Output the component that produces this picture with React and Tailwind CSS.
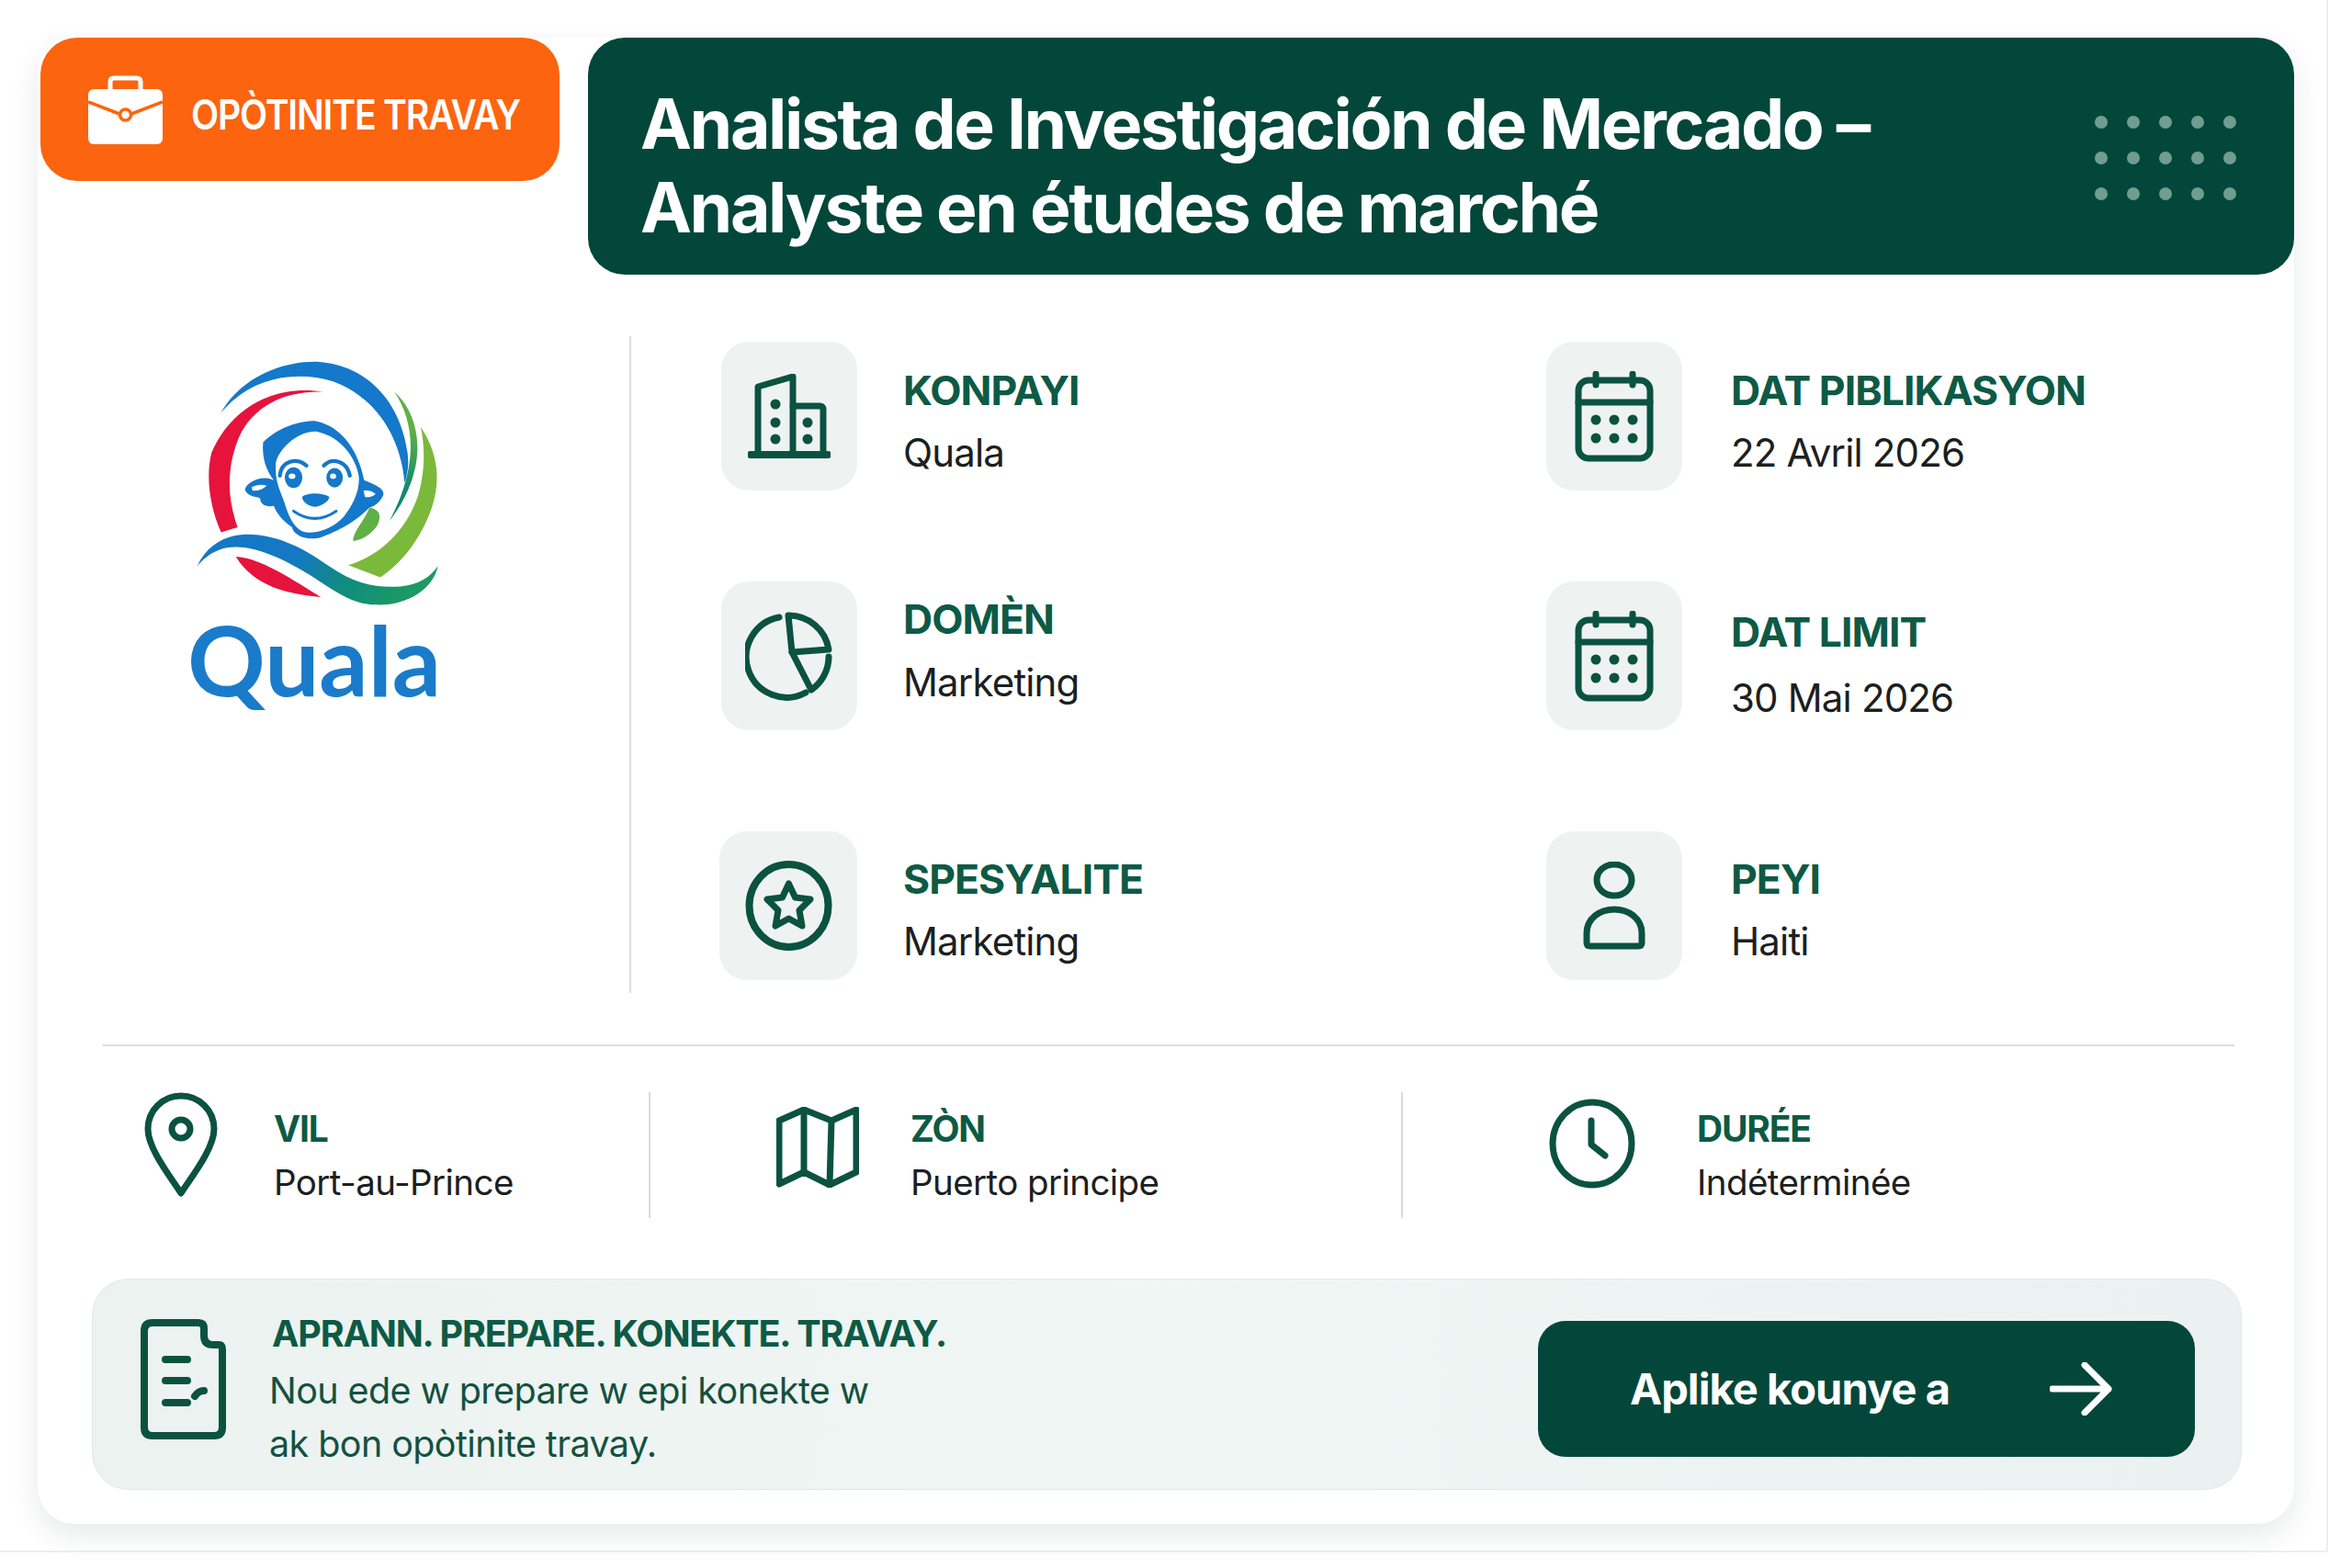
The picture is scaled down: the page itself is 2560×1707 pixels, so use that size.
import React from "react";

const stroke = "#0b5240";

function Svg({ w, h, vb, sw = 7, className = "", children }) {
  return (
    <svg
      width={w}
      height={h}
      viewBox={vb}
      fill="none"
      stroke={stroke}
      strokeWidth={sw}
      strokeLinecap="round"
      strokeLinejoin="round"
      className={className}
    >
      {children}
    </svg>
  );
}

function Building() {
  return (
    <Svg w={90} h={92} vb="0 0 90 92">
      <path d="M3 88H87" strokeWidth={8} />
      <path d="M11 88V14L49 3V88" />
      <path d="M49 35H78Q82 35 82 39V88" />
      <g fill={stroke} stroke="none">
        <circle cx="30" cy="33" r="5.5" />
        <circle cx="30" cy="53" r="5.5" />
        <circle cx="30" cy="71" r="5.5" />
        <circle cx="65" cy="53" r="5.5" />
        <circle cx="65" cy="71" r="5.5" />
      </g>
    </Svg>
  );
}

function Pie() {
  return (
    <Svg w={96} h={97} vb="0 0 96 97">
      <path d="M37 6A44 44 0 1 0 66 88" />
      <path d="M47 4A44 44 0 0 1 91 41L51 44Z" />
      <path d="M51 44L72 85A44 44 0 0 0 91 49" />
    </Svg>
  );
}

function Calendar() {
  return (
    <Svg w={86} h={99} vb="0 0 86 99">
      <rect x="4" y="10" width="78" height="85" rx="11" />
      <path d="M4 34H82" />
      <path d="M23 3V15M63 3V15" />
      <g fill={stroke} stroke="none">
        <circle cx="23" cy="53" r="5.5" />
        <circle cx="43" cy="53" r="5.5" />
        <circle cx="63" cy="53" r="5.5" />
        <circle cx="23" cy="73" r="5.5" />
        <circle cx="43" cy="73" r="5.5" />
        <circle cx="63" cy="73" r="5.5" />
      </g>
    </Svg>
  );
}

function StarBadge() {
  return (
    <Svg w={95} h={98} vb="0 0 95 98" sw={8}>
      <ellipse cx="47.5" cy="49" rx="43" ry="45" />
      <path d="M47.5 25L54.5 40L71 42L59 54L62 71L47.5 63L33 71L36 54L24 42L40.5 40Z" strokeWidth={7} />
    </Svg>
  );
}

function Person() {
  return (
    <Svg w={68} h={96} vb="0 0 68 96">
      <ellipse cx="34" cy="20" rx="19" ry="17" />
      <path d="M4 88V78C4 62 18 52 34 52C50 52 64 62 64 78V88Q64 92 60 92H8Q4 92 4 88Z" />
    </Svg>
  );
}

function Pin() {
  return (
    <Svg w={80} h={114} vb="0 0 80 114">
      <path d="M40 4C20 4 4 20 4 40C4 62 30 94 40 110C50 94 76 62 76 40C76 20 60 4 40 4Z" />
      <circle cx="40" cy="40" r="10" />
    </Svg>
  );
}

function MapIcon() {
  return (
    <Svg w={90} h={88} vb="0 0 90 88">
      <path d="M3 15L30 3L60 15L87 3V71L58 85L30 71L3 84Z" />
      <path d="M30 3V71M60 15L58 85" />
    </Svg>
  );
}

function Clock() {
  return (
    <Svg w={94} h={98} vb="0 0 94 98">
      <ellipse cx="47" cy="49" rx="43" ry="45" />
      <path d="M46 24V50L61 62" />
    </Svg>
  );
}

function Doc() {
  return (
    <Svg w={94} h={131} vb="0 0 94 131" sw={8}>
      <path d="M14 4H64Q70 4 70 10V18Q70 28 80 28H86Q90 28 90 33V118Q90 127 81 127H14Q5 127 5 118V13Q5 4 14 4Z" />
      <path d="M28 44H52M28 67H52M28 91H52" strokeWidth={8} />
      <path d="M60 84Q64 78 70 78" strokeWidth={8} />
    </Svg>
  );
}

function Briefcase() {
  return (
    <svg width="81" height="75" viewBox="0 0 81 75" className="shrink-0">
      <path d="M24 16V7Q24 3 28 3H53Q57 3 57 7V16" fill="none" stroke="#fff" strokeWidth="5" />
      <rect x="0" y="15" width="81" height="60" rx="6" fill="#fff" />
      <path d="M0 29L34 42M47 42L81 29" stroke="#fc640f" strokeWidth="3.5" />
      <circle cx="40.5" cy="43" r="6" fill="#fff" stroke="#fc640f" strokeWidth="3.5" />
    </svg>
  );
}

function Arrow() {
  return (
    <svg width="68" height="58" viewBox="0 0 68 58" fill="none" stroke="#fff" strokeWidth="7" strokeLinecap="round" strokeLinejoin="round">
      <path d="M3 29H64M38 3L64 29L38 55" />
    </svg>
  );
}

function QualaMark() {
  const blue = "#1478cb";
  return (
    <svg width="266" height="268" viewBox="130 65 800 810" className="ml-[8px]">
      <defs>
        <linearGradient id="wave" x1="0" x2="1" y1="0" y2="0.2">
          <stop offset="0.45" stopColor="#1478c4" />
          <stop offset="0.72" stopColor="#0f8c80" />
          <stop offset="1" stopColor="#1b9a63" />
        </linearGradient>
        <linearGradient id="leaf" x1="0" x2="0" y1="0" y2="1">
          <stop offset="0.3" stopColor="#5fb045" />
          <stop offset="0.75" stopColor="#108a6c" />
        </linearGradient>
      </defs>
      <path fill={blue} d="M210 240C270 130 400 70 520 70C680 75 800 190 825 370C830 410 825 440 815 470C805 330 730 190 580 135C440 95 300 130 210 240Z" />
      <path fill="#e6143c" d="M550 170C400 145 250 210 180 370C160 450 175 550 212 632L266 615C235 530 225 430 270 320C320 210 430 165 550 170Z" />
      <path fill="url(#leaf)" d="M782 170C850 230 870 330 850 420C835 490 800 550 765 595C800 530 835 440 835 350C835 280 815 220 782 170Z" />
      <path fill="#7ab93a" d="M868 285C925 370 935 460 905 550C870 650 810 730 735 780L630 740C730 710 820 630 860 510C880 440 885 360 868 285Z" />
      <path fill="#e6143c" d="M260 712C340 715 450 790 540 845C430 835 320 810 260 712Z" />
      <path fill="url(#wave)" d="M132 745C170 660 250 630 330 640C420 650 490 690 570 745C650 800 720 815 800 810C860 805 900 780 925 742C910 820 820 875 720 870C640 870 580 820 500 770C420 720 330 680 260 680C200 680 160 710 132 745Z" />
      <path fill={blue} d="M350 335C400 285 470 265 520 265C600 280 660 350 682 460C730 480 750 490 745 510C735 530 720 545 700 550C670 580 620 620 540 648C490 662 450 640 445 615C410 590 395 570 385 545C360 550 340 540 340 520C330 515 295 515 290 490C295 470 340 440 385 460C360 430 345 385 350 335Z" />
      <path fill="#fff" d="M392 400C410 340 480 295 525 300C600 315 655 380 665 450C668 500 640 550 615 580C585 615 530 636 490 632C460 625 440 595 425 550C415 510 385 470 392 400Z" />
      <path d="M405 445C410 395 460 385 492 412M550 412C575 385 625 395 635 445" fill="none" stroke={blue} strokeWidth="13" strokeLinecap="round" />
      <ellipse cx="450" cy="452" rx="29" ry="34" fill={blue} />
      <ellipse cx="585" cy="452" rx="27" ry="32" fill={blue} />
      <ellipse cx="445" cy="447" rx="11" ry="9" fill="#fff" />
      <ellipse cx="580" cy="447" rx="10" ry="9" fill="#fff" />
      <path fill={blue} d="M478 515C495 500 545 500 568 515C565 535 535 545 522 548C500 545 480 535 478 515Z" />
      <path d="M450 562Q520 610 590 562" fill="none" stroke={blue} strokeWidth="9" strokeLinecap="round" />
      <path fill="#fff" d="M312 483Q335 470 362 478Q345 495 315 495Z" />
      <path fill="#fff" d="M680 495Q700 490 720 505Q705 520 685 515Z" />
      <path fill="#5fb045" d="M700 550C725 555 745 570 725 610C705 640 670 660 645 660C650 620 680 600 700 550Z" />
    </svg>
  );
}

function Info({ icon, label, value, gap, top, boxClass = "w-[148px]", textLeft = 50 }) {
  return (
    <div className="flex items-start">
      <div className={`${boxClass} h-[162px] shrink-0 rounded-[30px] bg-[#eef3f1] flex items-center justify-center`}>
        {icon}
      </div>
      <div className="flex flex-col" style={{ paddingTop: top, rowGap: gap, marginLeft: textLeft }}>
        <div className="text-[44.5px] leading-[50px] font-bold tracking-[-0.022em] text-[#0d5a45]">{label}</div>
        <div className="text-[42px] leading-[50px] tracking-[-0.02em] text-[#1b2020]">{value}</div>
      </div>
    </div>
  );
}

function Stat({ icon, label, value, width, pl, gap, border = true }) {
  return (
    <div
      className={`flex items-start h-[137px] ${border ? "border-r-2 border-[#d8dcdb]" : ""}`}
      style={{ width, paddingLeft: pl }}
    >
      {icon}
      <div className="flex flex-col pt-[15px] gap-[8px]" style={{ marginLeft: gap }}>
        <div className="text-[39px] leading-[50px] font-bold tracking-[-0.03em] text-[#0d5a45]">{label}</div>
        <div className="text-[38.5px] leading-[50px] tracking-[-0.015em] text-[#1b2020]">{value}</div>
      </div>
    </div>
  );
}

export default function App() {
  return (
    <div className="w-[2560px] h-[1707px] bg-white font-['Inter',sans-serif] overflow-hidden">
      <div className="w-[2534px] h-[1690px] pt-[41px] pl-[41px] border-r-2 border-b-2 border-[#edefef]">
        <div className="w-[2456px] h-[1618px] rounded-[40px] bg-white shadow-[0_12px_32px_rgba(20,50,40,0.10)]">
          <div className="flex items-start pl-[3px] gap-[31px]">
            <div className="w-[565px] h-[156px] rounded-[40px] bg-[#fc640f] flex items-center pl-[52px] gap-[31px]">
              <Briefcase />
              <span className="inline-block mt-[12px] origin-left scale-x-[0.87] text-[45px] font-semibold text-white tracking-[-0.03em] whitespace-nowrap">
                OPÒTINITE TRAVAY
              </span>
            </div>
            <div className="flex-1 h-[258px] rounded-[40px] bg-[#03473a] flex items-center justify-between pl-[57px] pr-[63px]">
              <h1 className="mt-[20px] text-[75px] leading-[91px] font-bold tracking-[-0.032em] text-white">
                Analista de Investigación de Mercado –
                <br />
                Analyste en études de marché
              </h1>
              <div className="mt-[4px] grid grid-cols-5 gap-x-[21px] gap-y-[25px]">
                {Array.from({ length: 15 }).map((_, i) => (
                  <span key={i} className="w-[14px] h-[14px] rounded-full bg-[#6f9e90]" />
                ))}
              </div>
            </div>
          </div>

          <div className="flex mt-[67px] h-[715px]">
            <div className="w-[646px] h-full border-r-2 border-[#dcdfde] flex flex-col items-center pr-[42px] pt-[26px]">
              <QualaMark />
              <div className="text-[105px] leading-[110px] mt-[2px] font-bold text-[#1a7bcb] font-['Lato',sans-serif]">
                Quala
              </div>
            </div>
            <div className="grid grid-cols-[898px_1fr] grid-rows-[261px_272px_162px] pl-[98px] pt-[6px]">
              <Info icon={<Building />} label="KONPAYI" value="Quala" top={28} gap={18} />
              <Info icon={<Calendar />} label="DAT PIBLIKASYON" value="22 Avril 2026" top={28} gap={18} textLeft={53} />
              <Info icon={<Pie />} label="DOMÈN" value="Marketing" top={16} gap={19} />
              <Info icon={<Calendar />} label="DAT LIMIT" value="30 Mai 2026" top={30} gap={22} textLeft={53} />
              <Info icon={<StarBadge />} label="SPESYALITE" value="Marketing" top={27} gap={18} boxClass="w-[150px] -ml-[2px]" />
              <Info icon={<Person />} label="PEYI" value="Haiti" top={27} gap={18} textLeft={53} />
            </div>
          </div>

          <div className="ml-[71px] mr-[65px] mt-[56px] h-[2px] bg-[#dcdfde]" />

          <div className="flex mt-[50px]">
            <Stat icon={<Pin />} label="VIL" value="Port-au-Prince" width={667} pl={116} gap={61} />
            <Stat icon={<div className="pt-[16px]"><MapIcon /></div>} label="ZÒN" value="Puerto principe" width={819} pl={137} gap={56} />
            <Stat icon={<div className="pt-[7px]"><Clock /></div>} label="DURÉE" value="Indéterminée" width={800} pl={159} gap={67} border={false} />
          </div>

          <div className="ml-[59px] w-[2340px] h-[230px] mt-[66px] rounded-[40px] bg-gradient-to-r from-[#ebf2f0] via-[#eff6f4] to-[#ebf1f0] border border-[#e2e9e7] flex items-center pl-[51px] pr-[50px] justify-between">
            <div className="flex items-start mt-[22px]">
              <Doc />
              <div className="flex flex-col ml-[50px] -mt-[9px]">
                <div className="text-[39.5px] leading-[50px] font-bold tracking-[-0.03em] text-[#0d5a45]">
                  APRANN. PREPARE. KONEKTE. TRAVAY.
                </div>
                <div className="text-[39.5px] leading-[58px] tracking-[-0.015em] text-[#14513f] mt-[8px] -ml-[3px]">
                  Nou ede w prepare w epi konekte w
                  <br />
                  ak bon opòtinite travay.
                </div>
              </div>
            </div>
            <div className="mt-[10px] w-[715px] h-[148px] rounded-[30px] bg-[#03473a] flex items-center justify-between pl-[100px] pr-[90px]">
              <span className="text-[47px] font-bold tracking-[-0.02em] text-white">Aplike kounye a</span>
              <Arrow />
            </div>
          </div>
        </div>
      </div>
    </div>
  );
}
